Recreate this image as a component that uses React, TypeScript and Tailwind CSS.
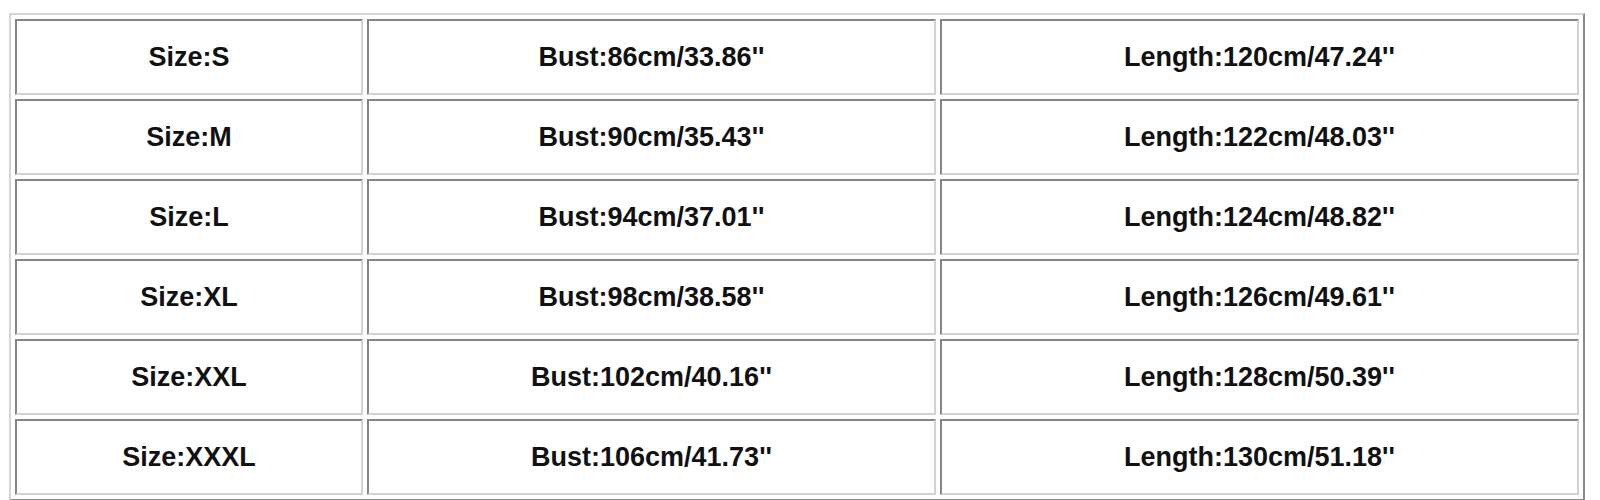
import React from "react";

const rows = [
  ["Size:S", "Bust:86cm/33.86''", "Length:120cm/47.24''"],
  ["Size:M", "Bust:90cm/35.43''", "Length:122cm/48.03''"],
  ["Size:L", "Bust:94cm/37.01''", "Length:124cm/48.82''"],
  ["Size:XL", "Bust:98cm/38.58''", "Length:126cm/49.61''"],
  ["Size:XXL", "Bust:102cm/40.16''", "Length:128cm/50.39''"],
  ["Size:XXXL", "Bust:106cm/41.73''", "Length:130cm/51.18''"],
];

const cell =
  "h-[76px] border-2 border-solid border-t-[#858585] border-l-[#858585] border-r-[#d2d2d2] border-b-[#d2d2d2] p-0 text-center align-middle font-bold text-[27px] text-[#111]";

export default function App() {
  return (
    <div className="w-[1600px] h-[500px] bg-white overflow-hidden pt-[13px] pl-[9px]" style={{ fontFamily: '"Liberation Sans", Arial, sans-serif' }}>
      <table className="table-fixed w-[1576px] border-separate border-spacing-[4px] border-2 border-solid border-t-[#d4d4d4] border-l-[#d4d4d4] border-r-[#8a8a8a] border-b-[#8a8a8a]">
        <colgroup>
          <col className="w-[348px]" />
          <col className="w-[569px]" />
          <col className="w-[639px]" />
        </colgroup>
        <tbody>
          {rows.map((r) => (
            <tr key={r[0]}>
              {r.map((c) => (
                <td key={c} className={cell}>
                  {c}
                </td>
              ))}
            </tr>
          ))}
        </tbody>
      </table>
    </div>
  );
}
